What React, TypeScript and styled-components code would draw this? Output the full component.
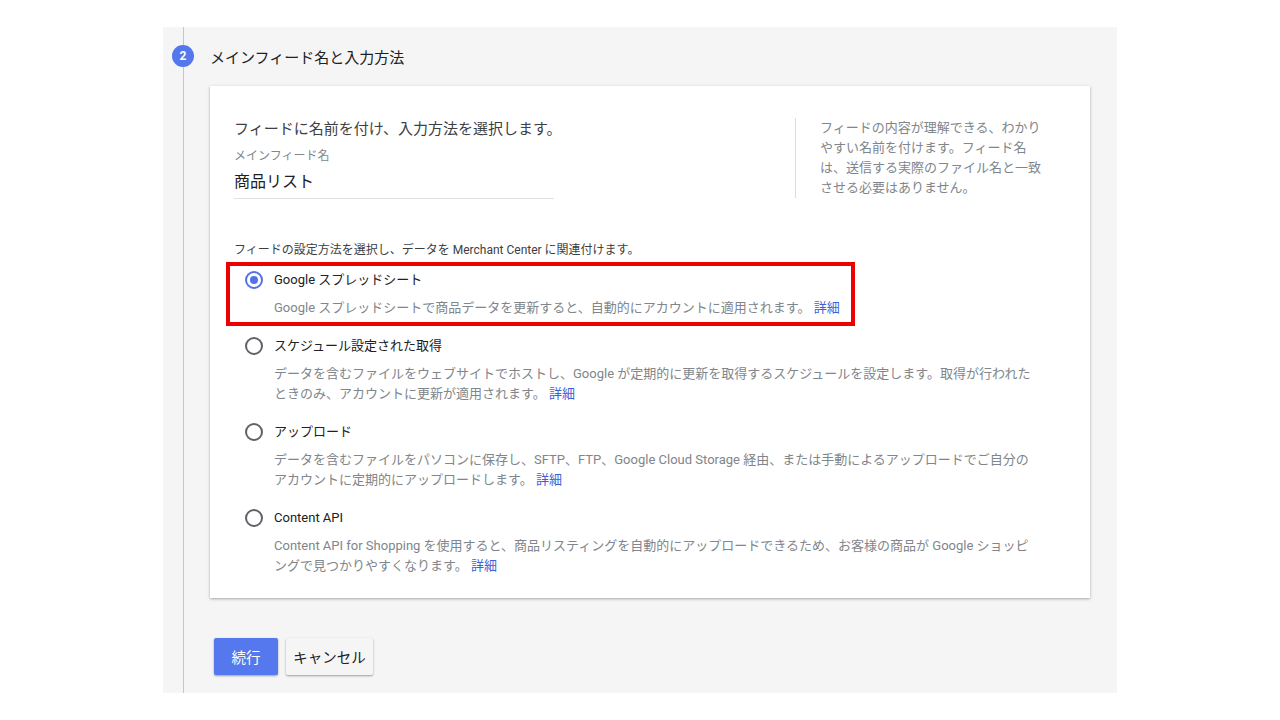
import React from "react";
import styled, { createGlobalStyle } from "styled-components";

const GlobalStyle = createGlobalStyle`
  html, body { margin: 0; padding: 0; background: #ffffff; }
  body {
    font-family: Roboto, "Noto Sans CJK JP", "Noto Sans", sans-serif;
    color: #202124;
    -webkit-font-smoothing: antialiased;
  }
  * { box-sizing: border-box; }
`;

const Page = styled.div`
  width: 1280px;
  height: 720px;
  padding: 27px 0 0 163px;
  overflow: hidden;
`;

const Panel = styled.section`
  width: 954px;
  height: 666px;
  background: #f5f5f5;
  display: flex;
`;

const Rail = styled.div`
  width: 40px;
  display: flex;
  flex-direction: column;
  align-items: center;
`;

const RailLine = styled.div<{ $grow?: boolean }>`
  width: 1px;
  background: #c6c6c6;
  height: 18px;
  flex: ${(p) => (p.$grow ? "1 1 auto" : "0 0 18px")};
`;

const StepBadge = styled.div`
  width: 22px;
  height: 22px;
  border-radius: 50%;
  background: #5577ee;
  color: #ffffff;
  font-size: 12px;
  font-weight: 700;
  display: flex;
  align-items: center;
  justify-content: center;
  flex: 0 0 22px;
`;

const Content = styled.div`
  margin-left: 7px;
  padding-top: 18px;
  display: flex;
  flex-direction: column;
`;

const StepTitle = styled.h2`
  margin: 0;
  font-size: 15px;
  font-weight: 400;
  line-height: 26px;
  height: 22px;
  color: #202124;
`;

const Card = styled.div`
  margin-top: 19px;
  width: 880px;
  height: 512px;
  background: #ffffff;
  box-shadow: 0 1px 2px rgba(0, 0, 0, 0.22), 0 1px 4px rgba(0, 0, 0, 0.12);
  padding: 32px 24px 0 24px;
  display: flex;
  flex-direction: column;
`;

const TopRow = styled.div`
  display: flex;
  align-items: flex-start;
`;

const NameColumn = styled.div`
  width: 561px;
  display: flex;
  flex-direction: column;
`;

const Lead = styled.p`
  margin: 0;
  font-size: 15px;
  line-height: 22px;
  color: #3c4043;
`;

const FieldLabel = styled.label`
  margin-top: 8px;
  font-size: 12px;
  line-height: 16px;
  color: #80868b;
`;

const FieldValue = styled.div`
  margin-top: 6px;
  width: 320px;
  font-size: 16px;
  line-height: 24px;
  padding-bottom: 4px;
  border-bottom: 1px solid #e0e0e0;
  color: #202124;
`;

const Help = styled.aside`
  border-left: 1px solid #dadce0;
  padding-left: 24px;
  width: 253px;
  font-size: 13px;
  line-height: 20px;
  color: #80868b;
  line-break: strict;
`;

const MethodIntro = styled.p`
  margin: 42px 0 0 0;
  font-size: 12px;
  line-height: 18px;
  color: #3c4043;
`;

const OptionList = styled.div`
  margin-top: 11px;
  display: flex;
  flex-direction: column;
  gap: 18px;
`;

const Option = styled.div<{ $highlight?: boolean }>`
  width: fit-content;
  padding-left: 11px;
  padding-right: ${(p) => (p.$highlight ? "7px" : "0")};
  outline: ${(p) => (p.$highlight ? "4px solid #ee0000" : "none")};
  outline-offset: 4px;
`;

const OptionHead = styled.div`
  display: flex;
  align-items: center;
  gap: 11px;
  height: 20px;
`;

const Radio = styled.span<{ $checked?: boolean }>`
  width: 18px;
  height: 18px;
  border-radius: 50%;
  border: 2px solid ${(p) => (p.$checked ? "#5273e6" : "#5f6368")};
  display: flex;
  align-items: center;
  justify-content: center;
  flex: 0 0 18px;
  &::after {
    content: "";
    width: 8px;
    height: 8px;
    border-radius: 50%;
    background: ${(p) => (p.$checked ? "#5273e6" : "transparent")};
  }
`;

const OptionLabel = styled.span`
  font-size: 13px;
  line-height: 20px;
  color: #202124;
`;

const OptionDesc = styled.p`
  margin: 8px 0 0 29px;
  max-width: 764px;
  font-size: 13px;
  line-height: 20px;
  color: #80868b;
`;

const More = styled.a`
  color: #3b5fd9;
  text-decoration: none;
`;

const Actions = styled.div`
  margin: 40px 0 0 4px;
  display: flex;
  gap: 8px;
`;

const Button = styled.button<{ $primary?: boolean }>`
  height: 37px;
  padding: 0;
  width: ${(p) => (p.$primary ? "64px" : "87px")};
  border: none;
  border-radius: 2px;
  font-family: inherit;
  font-size: 14.5px;
  background: ${(p) => (p.$primary ? "#5578ee" : "#f5f5f5")};
  color: ${(p) => (p.$primary ? "#ffffff" : "#202124")};
  box-shadow: 0 1px 2px rgba(0, 0, 0, 0.28), 0 1px 3px rgba(0, 0, 0, 0.1);
  cursor: pointer;
`;

const options = [
  {
    label: "Google スプレッドシート",
    desc: "Google スプレッドシートで商品データを更新すると、自動的にアカウントに適用されます。",
    checked: true,
  },
  {
    label: "スケジュール設定された取得",
    desc: "データを含むファイルをウェブサイトでホストし、Google が定期的に更新を取得するスケジュールを設定します。取得が行われたときのみ、アカウントに更新が適用されます。",
  },
  {
    label: "アップロード",
    desc: "データを含むファイルをパソコンに保存し、SFTP、FTP、Google Cloud Storage 経由、または手動によるアップロードでご自分のアカウントに定期的にアップロードします。",
  },
  {
    label: "Content API",
    desc: "Content API for Shopping を使用すると、商品リスティングを自動的にアップロードできるため、お客様の商品が Google ショッピングで見つかりやすくなります。",
  },
];

export default function App() {
  return (
    <>
      <GlobalStyle />
      <Page>
        <Panel>
          <Rail>
            <RailLine />
            <StepBadge>2</StepBadge>
            <RailLine $grow />
          </Rail>
          <Content>
            <StepTitle>メインフィード名と入力方法</StepTitle>
            <Card>
              <TopRow>
                <NameColumn>
                  <Lead>フィードに名前を付け、入力方法を選択します。</Lead>
                  <FieldLabel>メインフィード名</FieldLabel>
                  <FieldValue>商品リスト</FieldValue>
                </NameColumn>
                <Help>
                  フィードの内容が理解できる、わかりやすい名前を付けます。フィード名は、送信する実際のファイル名と一致させる必要はありません。
                </Help>
              </TopRow>
              <MethodIntro>
                フィードの設定方法を選択し、データを Merchant Center に関連付けます。
              </MethodIntro>
              <OptionList>
                {options.map((o) => (
                  <Option key={o.label} $highlight={o.checked}>
                    <OptionHead>
                      <Radio $checked={o.checked} />
                      <OptionLabel>{o.label}</OptionLabel>
                    </OptionHead>
                    <OptionDesc>
                      {o.desc} <More href="#">詳細</More>
                    </OptionDesc>
                  </Option>
                ))}
              </OptionList>
            </Card>
            <Actions>
              <Button $primary>続行</Button>
              <Button>キャンセル</Button>
            </Actions>
          </Content>
        </Panel>
      </Page>
    </>
  );
}
